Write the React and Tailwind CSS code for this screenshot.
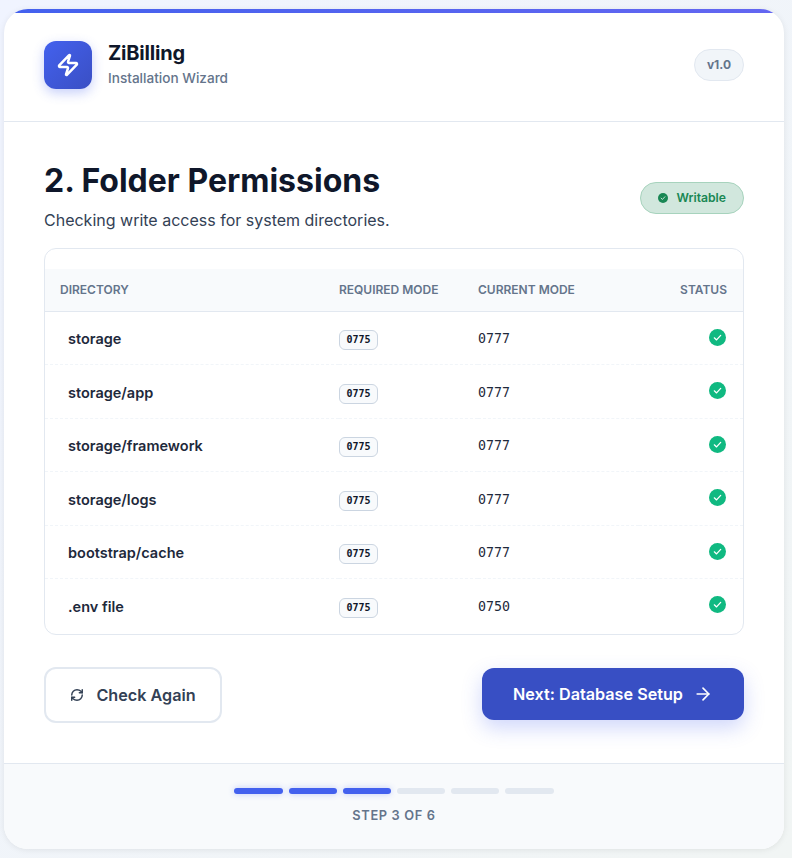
import { ArrowRight, RefreshCw, Zap } from "lucide-react";

const rows = [
  { dir: "storage", current: "0777" },
  { dir: "storage/app", current: "0777" },
  { dir: "storage/framework", current: "0777" },
  { dir: "storage/logs", current: "0777" },
  { dir: "bootstrap/cache", current: "0777" },
  { dir: ".env file", current: "0750" },
];

function CheckDot({ className }) {
  return (
    <svg viewBox="0 0 16 16" className={className}>
      <circle cx="8" cy="8" r="8" fill="currentColor" />
      <path d="M5 8.3l2.1 2L11 6" fill="none" stroke="white" strokeWidth="1.2" strokeLinecap="round" strokeLinejoin="round" />
    </svg>
  );
}

export default function App() {
  return (
    <div className="h-[858px] pl-1 pr-2 pt-[9px] overflow-hidden bg-gradient-to-br from-[#f0f4ff] to-[#f1f5f4] font-['Inter',sans-serif]">
      <div className="relative h-[840px] overflow-hidden rounded-3xl bg-white shadow-[0_1px_6px_rgba(0,0,0,0.08)]">
        <div className="absolute inset-x-0 top-0 h-1 bg-gradient-to-r from-[#4361ee] to-[#6366f1]"></div>

        <header className="h-[113px] flex items-center justify-between px-10 border-b border-[#e2e8f0]">
          <div className="flex items-center gap-4">
            <div className="w-12 h-12 rounded-xl flex items-center justify-center text-white bg-gradient-to-br from-[#4361ee] to-[#3a4fc4] shadow-[0_4px_12px_rgba(67,97,238,0.3)]">
              <Zap className="w-6 h-6" strokeWidth={2.5} />
            </div>
            <div className="-mt-[2px]">
              <h2 className="text-[20px] leading-[26px] font-bold text-[#0f172a] tracking-[-0.2px] -mt-[1px]">ZiBilling</h2>
              <p className="mt-[2px] text-[13.6px] leading-[20px] font-medium text-[#64748b]">Installation Wizard</p>
            </div>
          </div>
          <span className="px-3 py-1.5 rounded-full border border-[#e2e8f0] bg-[#f1f5f9] text-xs leading-[18px] font-bold text-[#64748b]">v1.0</span>
        </header>

        <main className="px-10 pt-10">
          <div className="flex items-center justify-between">
            <div>
              <h1 className="text-[32px] leading-[38px] font-bold text-[#0f172a]">2. Folder Permissions</h1>
              <p className="mt-2 text-base leading-6 text-[#334155]">Checking write access for system directories.</p>
            </div>
            <span className="mt-[2px] h-8 flex items-center gap-2 px-[17px] rounded-full border border-[#a7d3bd] bg-[#d1e7dd] text-[12.2px] font-semibold text-[#198754]">
              <CheckDot className="w-[10px] h-[10px]" />
              Writable
            </span>
          </div>

          <div className="mt-4 h-[387px] rounded-xl border border-[#e2e8f0] pt-5 overflow-hidden">
            <table className="w-full border-collapse">
              <thead>
                <tr className="h-[42.3px] bg-[#f8fafc] border-b border-[#e2e8f0] text-xs font-semibold text-[#64748b]">
                  <th className="w-[294px] pl-[15px] text-left font-semibold">DIRECTORY</th>
                  <th className="w-[139px] text-left font-semibold">REQUIRED MODE</th>
                  <th className="text-left font-semibold">CURRENT MODE</th>
                  <th className="pr-4 text-right font-semibold">STATUS</th>
                </tr>
              </thead>
              <tbody>
                {rows.map((row) => (
                  <tr key={row.dir} className="h-[53.5px] border-b border-dashed border-[#f1f5f9] last:border-b-0">
                    <td className="pl-[23px] pt-[2px] text-[14.5px] font-semibold text-[#1e293b]">{row.dir}</td>
                    <td className="pt-1">
                      <code className="block w-[39px] text-center py-[2px] rounded-md border border-[#cbd5e1] bg-[#f8fafc] font-['DejaVu_Sans_Mono',monospace] text-[10px] leading-[14px] font-bold text-[#0f172a]">0775</code>
                    </td>
                    <td className="pt-[2px] font-['DejaVu_Sans_Mono',monospace] text-[13.3px] text-[#1e293b]">{row.current}</td>
                    <td className="pt-[2px] pr-[17px]">
                      <CheckDot className="block w-[17px] h-[17px] ml-auto -mt-1 text-[#10b981]" />
                    </td>
                  </tr>
                ))}
              </tbody>
            </table>
          </div>

          <div className="mt-8 flex items-center justify-between">
            <button className="w-[178px] h-14 flex items-center justify-center gap-3 rounded-xl border-2 border-[#e2e8f0] bg-white text-[16.2px] font-semibold text-[#334155]">
              <RefreshCw className="w-[14px] h-[14px]" strokeWidth={2.5} />
              Check Again
            </button>
            <button className="mb-[2px] w-[262px] h-[52px] flex items-center justify-center gap-2.5 rounded-xl bg-[#384fc4] text-[16.2px] font-semibold text-white shadow-[0_8px_20px_rgba(67,97,238,0.25)]">
              Next: Database Setup
              <ArrowRight className="w-5 h-5" />
            </button>
          </div>
        </main>

        <footer className="absolute inset-x-0 bottom-0 h-[86px] border-t border-[#e2e8f0] bg-[#f8fafc] pt-6 flex flex-col items-center">
          <div className="flex gap-1.5">
            {[1, 2, 3, 4, 5, 6].map((n) => (
              <div key={n} className={n <= 3 ? "w-[48.2px] h-[6px] rounded-full bg-[#4361ee] shadow-[0_0_6px_rgba(67,97,238,0.3)]" : "w-[48.2px] h-[6px] rounded-full bg-[#e2e8f0]"}></div>
            ))}
          </div>
          <p className="mt-[13px] text-[12.8px] leading-[18px] font-semibold tracking-[0.65px] text-[#64748b]">STEP 3 OF 6</p>
        </footer>
      </div>
    </div>
  );
}
